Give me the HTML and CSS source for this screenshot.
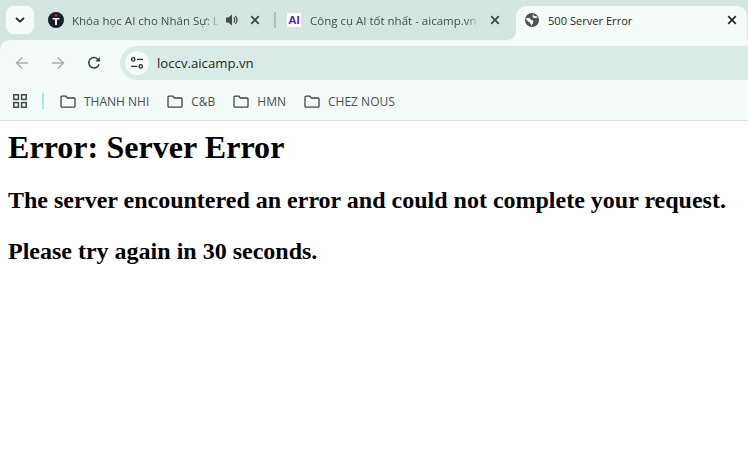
FILE: index.html
```html
<!DOCTYPE html>
<html lang="vi">
<head>
<meta charset="utf-8">
<title>500 Server Error</title>
<link rel="stylesheet" href="styles.css">
</head>
<body>
<header class="chrome">
  <div class="tabstrip">
    <button class="tabsearch" aria-label="Search tabs">
      <svg width="10" height="6" viewBox="0 0 10 6"><path d="M1 1l4 3.6L9 1" fill="none" stroke="#1f2b2a" stroke-width="1.8"/></svg>
    </button>
    <div class="tab tab-one">
      <svg class="favicon" width="16" height="16" viewBox="0 0 16 16"><circle cx="8" cy="8" r="8" fill="#15202b"/><circle cx="8" cy="3.6" r="1.4" fill="#e5252a"/><path d="M4.6 6h6.8v1.5H8.9V13H7.1V7.5H4.6z" fill="#fff"/></svg>
      <span class="tab-title title-one">Khóa học AI cho Nhân Sự: L</span>
      <svg class="audio" width="14" height="14" viewBox="0 0 14 14"><path d="M1 4.6h2.4L7 1.6v10.8L3.4 9.4H1z" fill="#444c4b"/><path d="M8.6 4.6a3.2 3.2 0 0 1 0 4.8M10.2 3a5.4 5.4 0 0 1 0 8" fill="none" stroke="#444c4b" stroke-width="1.3"/></svg>
      <svg class="close" width="10" height="10" viewBox="0 0 10 10"><path d="M1.2 1.2l7.6 7.6M8.8 1.2l-7.6 7.6" stroke="#3c4645" stroke-width="1.7"/></svg>
    </div>
    <div class="tabsep"></div>
    <div class="tab tab-two">
      <div class="ai-icon">AI</div>
      <span class="tab-title title-two">Công cụ AI tốt nhất - aicamp.vn</span>
      <svg class="close" width="10" height="10" viewBox="0 0 10 10"><path d="M1.2 1.2l7.6 7.6M8.8 1.2l-7.6 7.6" stroke="#3c4645" stroke-width="1.7"/></svg>
    </div>
    <div class="tab tab-active">
      <svg class="favicon" width="14" height="14" viewBox="0 0 14 14"><circle cx="7" cy="7" r="7" fill="#4d5554"/><path d="M.6 5.6l3.6-.8L6 6.8l2.4.8L8 10.2l-1.6 2.4L5 9.6 3 8.4zM8 1l1 2 2.8.2.8 1.4-2.8.6L7.4 4z" fill="#f4fbf8"/></svg>
      <span class="tab-title title-active">500 Server Error</span>
      <svg class="close" width="10" height="10" viewBox="0 0 10 10"><path d="M1.2 1.2l7.6 7.6M8.8 1.2l-7.6 7.6" stroke="#222a29" stroke-width="1.7"/></svg>
    </div>
  </div>
  <div class="toolbar">
    <svg class="nav nav-back" width="16" height="14" viewBox="0 0 16 14"><path d="M14 7H3M8 1.6L2.6 7 8 12.4" fill="none" stroke="#a9b2b0" stroke-width="1.5"/></svg>
    <svg class="nav nav-forward" width="16" height="14" viewBox="0 0 16 14"><path d="M2 7h11M8 1.6L13.4 7 8 12.4" fill="none" stroke="#a9b2b0" stroke-width="1.5"/></svg>
    <svg class="nav nav-reload" width="14" height="14" viewBox="0 0 14 14"><path d="M12 8.2A5.2 5.2 0 1 1 10.8 3.2L12.4 4.8" fill="none" stroke="#36413f" stroke-width="1.5"/><path d="M12.9 1v4.6H8.3z" fill="#36413f"/></svg>
    <div class="omnibox">
      <div class="site-info">
        <svg width="14" height="14" viewBox="0 0 14 14"><g fill="none" stroke="#2b3635" stroke-width="1.3"><circle cx="3.2" cy="3.4" r="1.7"/><path d="M7 3.4h6M1 10.4h6.4"/><circle cx="10.8" cy="10.4" r="1.7"/></g></svg>
      </div>
      <span class="url">loccv.aicamp.vn</span>
    </div>
  </div>
  <div class="bookmarks">
    <svg class="apps" width="14" height="14" viewBox="0 0 14 14"><g fill="none" stroke="#3d4746" stroke-width="1.5"><rect x=".8" y=".8" width="4.6" height="4.6"/><rect x="8.6" y=".8" width="4.6" height="4.6"/><rect x=".8" y="8.6" width="4.6" height="4.6"/><rect x="8.6" y="8.6" width="4.6" height="4.6"/></g></svg>
    <div class="divider"></div>
    <div class="bookmark bm-first">
      <svg width="16" height="13" viewBox="0 0 16 13"><path d="M1 11.2V2.2c0-.6.4-1 1-1h3.8l1.6 1.8H14c.6 0 1 .4 1 1v7.2c0 .6-.4 1-1 1H2c-.6 0-1-.4-1-1z" fill="none" stroke="#3d4746" stroke-width="1.3"/></svg>
      <span>THANH NHI</span>
    </div>
    <div class="bookmark">
      <svg width="16" height="13" viewBox="0 0 16 13"><path d="M1 11.2V2.2c0-.6.4-1 1-1h3.8l1.6 1.8H14c.6 0 1 .4 1 1v7.2c0 .6-.4 1-1 1H2c-.6 0-1-.4-1-1z" fill="none" stroke="#3d4746" stroke-width="1.3"/></svg>
      <span>C&amp;B</span>
    </div>
    <div class="bookmark">
      <svg width="16" height="13" viewBox="0 0 16 13"><path d="M1 11.2V2.2c0-.6.4-1 1-1h3.8l1.6 1.8H14c.6 0 1 .4 1 1v7.2c0 .6-.4 1-1 1H2c-.6 0-1-.4-1-1z" fill="none" stroke="#3d4746" stroke-width="1.3"/></svg>
      <span>HMN</span>
    </div>
    <div class="bookmark">
      <svg width="16" height="13" viewBox="0 0 16 13"><path d="M1 11.2V2.2c0-.6.4-1 1-1h3.8l1.6 1.8H14c.6 0 1 .4 1 1v7.2c0 .6-.4 1-1 1H2c-.6 0-1-.4-1-1z" fill="none" stroke="#3d4746" stroke-width="1.3"/></svg>
      <span>CHEZ NOUS</span>
    </div>
  </div>
</header>
<main class="content">
  <h1>Error: Server Error</h1>
  <h2>The server encountered an error and could not complete your request.</h2>
  <h2>Please try again in 30 seconds.</h2>
</main>
</body>
</html>
```
FILE: styles.css
```css
* { box-sizing: border-box; }
html, body { margin: 0; height: 100%; background: #fff; overflow: hidden; }
body { font-family: "Open Sans", "Noto Sans", sans-serif; }

.chrome { display: flex; flex-direction: column; background: #d5e5e1; }

.tabstrip {
  height: 40px;
  display: flex;
  align-items: flex-end;
  padding-left: 6px;
}
.tabsearch {
  width: 28px;
  height: 28px;
  margin-bottom: 6px;
  border: 0;
  padding: 0;
  border-radius: 8px;
  background: #f6fcfa;
  display: flex;
  align-items: center;
  justify-content: center;
}
.tab {
  height: 34px;
  display: flex;
  align-items: center;
  padding-bottom: 6px;
  font-size: 11.5px;
  color: #46504e;
  flex: none;
}
.tab-title { display: block; overflow: hidden; white-space: nowrap; }
.tab-one { width: 240px; padding-left: 14px; }
.title-one {
  width: 148px;
  margin-left: 8px;
  -webkit-mask-image: linear-gradient(to right, #000 134px, transparent 148px);
  mask-image: linear-gradient(to right, #000 134px, transparent 148px);
}
.audio { margin-left: 5px; }
.tab-one .close { margin-left: 11px; }
.tabsep { width: 2px; height: 16px; background: #b4bfbc; margin-bottom: 12px; flex: none; }
.tab-two { width: 240px; padding-left: 11px; }
.ai-icon {
  width: 14px;
  height: 14px;
  background: #fff;
  color: #4c1dc9;
  font: bold 11.5px/14px "Liberation Sans", sans-serif;
  text-align: center;
}
.title-two {
  width: 169px;
  margin-left: 9px;
  -webkit-mask-image: linear-gradient(to right, #000 156px, transparent 169px);
  mask-image: linear-gradient(to right, #000 156px, transparent 169px);
}
.tab-two .close { margin-left: 11px; }
.tab-active {
  position: relative;
  width: 231px;
  background: #f4fbf8;
  border-radius: 10px 10px 0 0;
  padding-left: 9px;
  color: #222a29;
}
.tab-active::before {
  content: "";
  position: absolute;
  left: -8px;
  bottom: 0;
  width: 8px;
  height: 8px;
  background: radial-gradient(circle at 0 0, #d5e5e1 7.5px, #f4fbf8 8px);
}
.title-active { width: 179px; margin-left: 9px; font-size: 11.1px; }

.toolbar {
  height: 46px;
  background: #f4fbf8;
  border-radius: 10px 0 0 0;
  display: flex;
  align-items: center;
  padding-left: 14px;
}
.nav { flex: none; }
.nav-forward { margin-left: 20px; }
.nav-reload { margin-left: 21px; }
.omnibox {
  margin-left: 19px;
  flex: 1;
  height: 34px;
  background: #d9ebe6;
  border-radius: 17px 0 0 17px;
  display: flex;
  align-items: center;
  padding-left: 5px;
}
.site-info {
  width: 24px;
  height: 24px;
  border-radius: 50%;
  background: #f4fbf8;
  display: flex;
  align-items: center;
  justify-content: center;
}
.url { margin-left: 8px; font-size: 13.2px; color: #1f2927; }

.bookmarks {
  height: 35px;
  background: #f4fbf8;
  border-bottom: 1px solid #dbe3e0;
  display: flex;
  align-items: center;
  padding-left: 13px;
  padding-bottom: 4px;
  font-size: 12px;
  color: #46504e;
}
.divider { width: 2px; height: 16px; background: #9ceee3; margin-left: 15px; }
.bookmark { display: flex; align-items: center; gap: 8px; margin-left: 18px; }
.bm-first { margin-left: 16px; }

.content { padding: 8px; color: #000; font-family: "Liberation Serif", serif; }
h1 { font-size: 32px; margin: 0 0 21.44px; line-height: 37px; letter-spacing: .05px; }
h2 { font-size: 24px; margin: 0 0 24px; line-height: 27px; }
```
